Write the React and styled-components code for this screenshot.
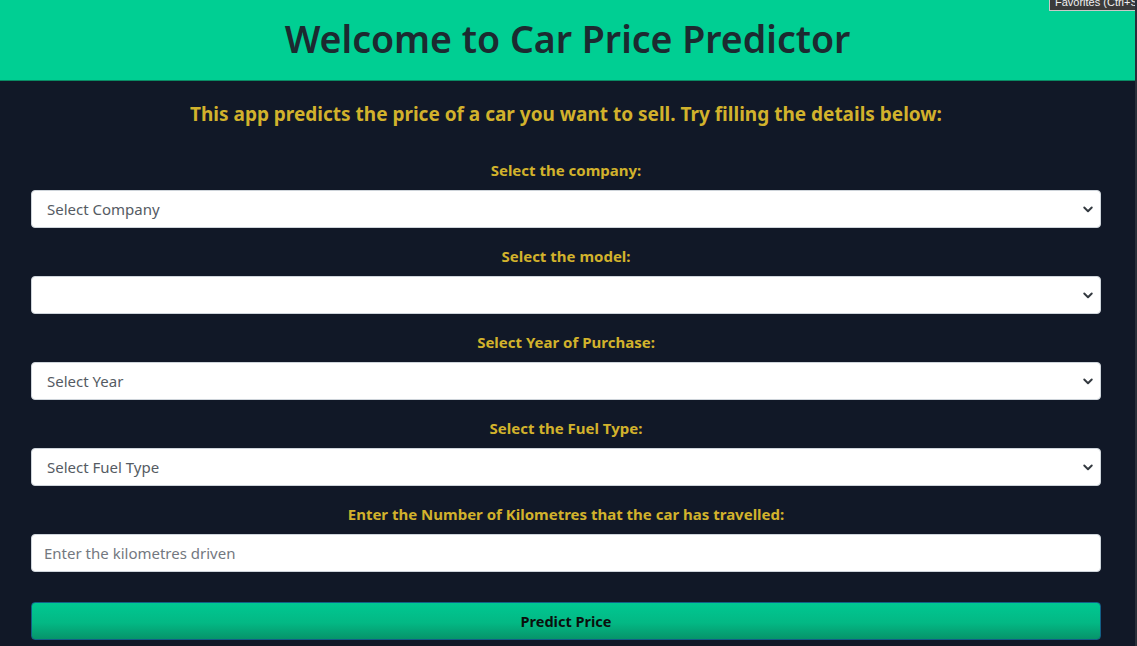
import React from 'react'
import styled, {createGlobalStyle} from 'styled-components'

const GlobalStyle = createGlobalStyle`
  html, body {
    margin: 0;
    padding: 0;
    background-color: #111827;
  }

  body {
    font-family: "Noto Sans", "Open Sans", sans-serif;
    overflow: hidden;
  }
`

const Page = styled.div`
  position: relative;
  min-height: 646px;
  display: flex;
  flex-direction: column;
  border-right: 2px solid #2a2f3a;
  box-sizing: border-box;
`

const Header = styled.header`
  background-color: #00cf93;
  height: 81px;
  display: flex;
  align-items: center;
  justify-content: center;
  border-bottom: 1px solid #0a8a63;
  box-sizing: border-box;
`

const Title = styled.h1`
  margin: 0 0 4px;
  font-size: 37.5px;
  font-weight: 600;
  color: #1c2a30;
`

const Main = styled.main`
  padding: 21px 34px 0 31px;
  display: flex;
  flex-direction: column;
`

const Intro = styled.h2`
  margin: 0 0 34px;
  font-size: 19px;
  line-height: 24px;
  font-weight: 700;
  text-align: center;
  color: #d2b22c;
`

const Form = styled.form`
  display: flex;
  flex-direction: column;
  gap: 18px;
`

const Field = styled.div`
  display: flex;
  flex-direction: column;
  gap: 10px;
`

const Label = styled.label`
  font-size: 15px;
  line-height: 20px;
  font-weight: 700;
  text-align: center;
  color: #d2b22c;
`

const controlBase = `
  box-sizing: border-box;
  width: 100%;
  height: 38px;
  border: 1px solid #ced4da;
  border-radius: 4px;
  background-color: #fff;
  font-family: "Noto Sans", "Open Sans", sans-serif;
  font-size: 15px;
  outline: none;
`

const Select = styled.select`
  ${controlBase}
  appearance: none;
  padding: 0 40px 0 15px;
  color: #555b63;
  background-image: url("data:image/svg+xml,%3csvg xmlns='http://www.w3.org/2000/svg' viewBox='0 0 16 16'%3e%3cpath fill='none' stroke='%23343a40' stroke-linecap='round' stroke-linejoin='round' stroke-width='2.6' d='M3 6l5 5 5-5'/%3e%3c/svg%3e");
  background-repeat: no-repeat;
  background-position: right 6px center;
  background-size: 12px 12px;
`

const Input = styled.input`
  ${controlBase}
  padding: 0 12px;
  color: #333;

  &::placeholder {
    color: #737880;
  }
`

const PredictButton = styled.button`
  margin-top: 12px;
  height: 38px;
  width: 100%;
  border: 1px solid #125f86;
  border-radius: 4px;
  background: linear-gradient(180deg, #00c892 0%, #03b884 55%, #07946a 100%);
  color: #0b0f0d;
  font-family: "Noto Sans", "Open Sans", sans-serif;
  font-size: 14.5px;
  font-weight: 700;
  cursor: pointer;
`

const Tooltip = styled.div`
  position: absolute;
  top: -6px;
  right: 0;
  width: 86px;
  height: 17px;
  padding: 0 5px;
  box-sizing: border-box;
  background-color: #3b3b3b;
  border: 1px solid #c9c9c9;
  border-right: none;
  color: #f0f0f0;
  font-family: "Liberation Sans", sans-serif;
  font-size: 11px;
  line-height: 15px;
  white-space: nowrap;
  overflow: hidden;
`

const fields = [
  {label: 'Select the company:', placeholder: 'Select Company'},
  {label: 'Select the model:', placeholder: ''},
  {label: 'Select Year of Purchase:', placeholder: 'Select Year'},
  {label: 'Select the Fuel Type:', placeholder: 'Select Fuel Type'},
]

const App = () => {
  return (
    <Page>
      <GlobalStyle />
      <Header>
        <Title>Welcome to Car Price Predictor</Title>
      </Header>
      <Main>
        <Intro>
          This app predicts the price of a car you want to sell. Try filling the details below:
        </Intro>
        <Form onSubmit={e => e.preventDefault()}>
          {fields.map(field => (
            <Field key={field.label}>
              <Label>{field.label}</Label>
              <Select defaultValue="">
                <option value="">{field.placeholder}</option>
              </Select>
            </Field>
          ))}
          <Field>
            <Label>Enter the Number of Kilometres that the car has travelled:</Label>
            <Input type="text" placeholder="Enter the kilometres driven" />
          </Field>
          <PredictButton type="submit">Predict Price</PredictButton>
        </Form>
      </Main>
      <Tooltip>Favorites (Ctrl+Shift+O)</Tooltip>
    </Page>
  )
}

export default App
